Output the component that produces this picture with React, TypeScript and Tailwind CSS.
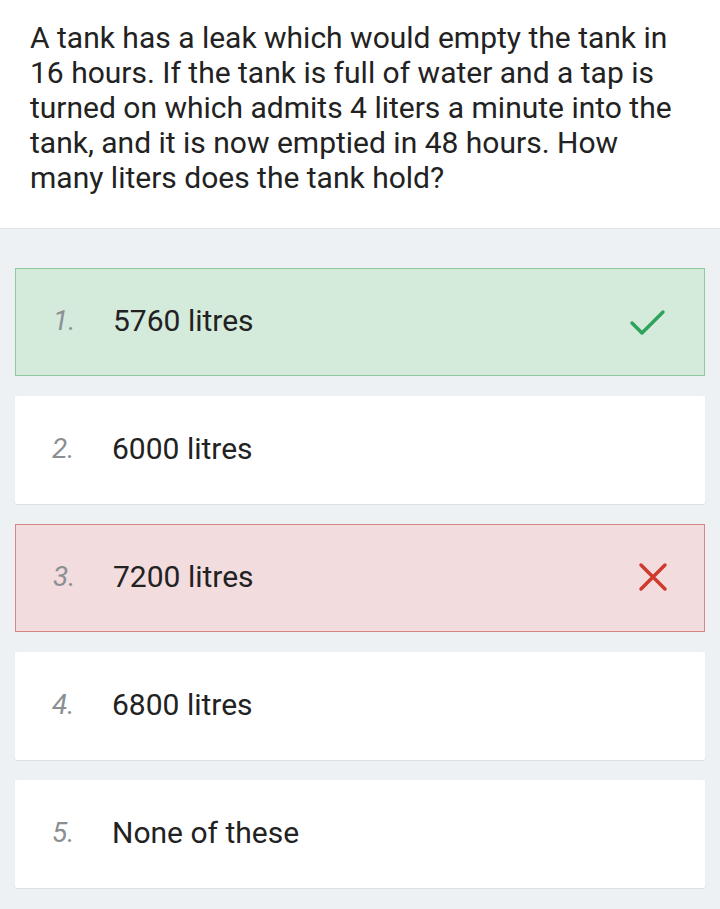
const options = [
  { n: 1, text: '5760 litres', state: 'correct' },
  { n: 2, text: '6000 litres', state: 'none' },
  { n: 3, text: '7200 litres', state: 'wrong' },
  { n: 4, text: '6800 litres', state: 'none' },
  { n: 5, text: 'None of these', state: 'none' },
];

function CheckIcon() {
  return (
    <svg className="w-[40px] h-[40px]" viewBox="0 0 40 40" fill="none">
      <path d="M4 22l10 10L35 11" stroke="#2fa35c" strokeWidth={3.5} strokeLinecap="round" strokeLinejoin="round" />
    </svg>
  );
}

function CrossIcon() {
  return (
    <svg className="w-[30px] h-[30px]" viewBox="0 0 30 30" fill="none">
      <path d="M3 3l24 24M27 3L3 27" stroke="#cf3a2c" strokeWidth={3.5} strokeLinecap="round" />
    </svg>
  );
}

export default function App() {
  return (
    <div className="min-h-[909px] bg-[#edf1f3] font-['Roboto',sans-serif]">
      <div className="bg-white px-[30px] pt-[20px] pb-[33px] border-b border-[#dde3e6]">
        <p className="text-[30px] leading-[35px] text-[#222222]">
          A tank has a leak which would empty the tank in 16 hours. If the tank is full of water and a tap is
          turned on which admits 4 liters a minute into the tank, and it is now emptied in 48 hours. How many
          liters does the tank hold?
        </p>
      </div>

      <div className="flex flex-col gap-[20px] px-[15px] pt-[39px] pb-[20px]">
        {options.map(o => (
          <div
            key={o.n}
            className={`h-[108px] flex items-center pl-[37px] pr-[36px] pb-[3px] ${
              o.state === 'correct'
                ? 'bg-[#d4eadb] border border-[#92c8a0]'
                : o.state === 'wrong'
                ? 'bg-[#f3dcde] border border-[#d88585]'
                : 'bg-white shadow-[0_1px_1px_rgba(0,0,0,0.08)] rounded-[2px]'
            }`}
          >
            <span className="w-[60px] text-[28px] italic text-[#8a8f94]">{o.n}.</span>
            <span className="flex-1 text-[30px] text-[#222222]">{o.text}</span>
            {o.state === 'correct' && <CheckIcon />}
            {o.state === 'wrong' && <CrossIcon />}
          </div>
        ))}
      </div>
    </div>
  );
}
